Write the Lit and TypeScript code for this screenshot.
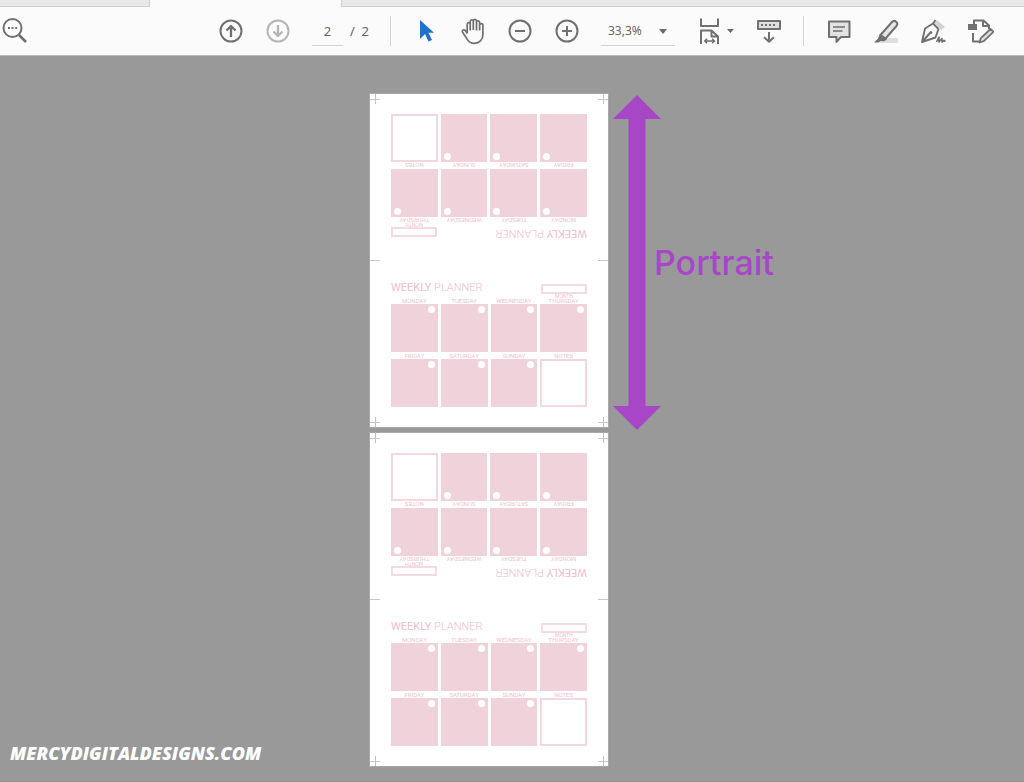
import { LitElement, html, css, svg } from "lit";
import { customElement, property } from "lit/decorators.js";

const DAYS = ["MONDAY", "TUESDAY", "WEDNESDAY", "THURSDAY", "FRIDAY", "SATURDAY", "SUNDAY"];

const icons = {
  find: svg`<circle cx="11.5" cy="11" r="9" /><path d="M18 18 L25 25" stroke-width="2.6" /><path d="M7 11h2M10.6 11h2M14.2 11h2" />`,
  up: svg`<circle cx="14" cy="14" r="10.5" /><path d="M14 20V9M9.5 13.5 14 9l4.500 4.500" stroke-width="2.300" />`,
  down: svg`<circle cx="14" cy="14" r="10.5" /><path d="M14 8v11M9.500 14.500 14 19l4.500-4.500" stroke-width="2.300" />`,
  select: svg`<path d="M8 3v19l5-5 3.500 7.500 3.500-1.600-3.500-7.200H22z" fill="#1f72c9" stroke="none" />`,
  hand: svg`<path d="M8.200 16.500V7.200c0-2.200 3-2.200 3 0v6.300M11.200 13V4.600c0-2.200 3.100-2.200 3.100 0V13M14.300 13V4c0-2.200 3.200-2.200 3.200 0v9.500M17.500 13V5.600c0-2.200 3.100-2.200 3.100 0v8M20.600 13V8.300c0-2.200 3.300-2.200 3.300 0v9.200c0 5.500-3.600 8.800-8.400 8.800-3.700 0-6.200-1.600-7.900-5l-4.200-6.200c-.8-1.900 1.600-3 3-1.500l1.800 2.900" stroke-width="1.700" />`,
  minus: svg`<circle cx="14" cy="14" r="10.500" /><path d="M9 14h10" />`,
  plus: svg`<circle cx="14" cy="14" r="10.500" /><path d="M9 14h10M14 9v10" />`,
  fit: svg`<path d="M5 1.500v7.500h17V1.500M5 27V13.500h10.500l6.500 6V27M15.500 13.500v6H22" /><path d="M8.500 24h10M11 21.700 8.700 24l2.300 2.300M16.200 21.700 18.500 24l-2.300 2.300" stroke-width="1.500" />`,
  keys: svg`<rect x="3" y="4" width="22" height="8" fill="#e0e0e0" /><path d="M6 8h2M10 8h2M14 8h2M18 8h2" /><path d="M14 15v9.500M9 20.200l5 4.600 5-4.600" />`,
  comment: svg`<path d="M4 4.500h20.500v15.500h-8.500l-4.500 4.800V20H4z" fill="#e2e2e2" /><path d="M8 10h12M8 14h9.500" stroke-width="1.400" />`,
  mark: svg`<path d="M10 21h16v5H7z" fill="#dedede" stroke="none" /><path d="M8.500 18 20 5c2.500-2.800 7 .8 4.500 4L13.500 21.500z" fill="#e6e6e6" /><path d="M8 16.500l7 6-3 1.800-3.500-.3-1.800 1.600H2l4-4z" fill="#707070" stroke="none" />`,
  sign: svg`<path d="m18 3 8 7-3.500 3-7-7z" fill="#d4d4d4" stroke="none" /><path d="M14 6.500 19.500 12l-3 8.500L3 25 6 11.500zM16.500 3l-2.500 3.500 5.500 5.500M3.500 24.500l7.500-8.500" stroke-width="1.900" /><circle cx="11.800" cy="15.500" r="1.500" fill="#707070" stroke="none" /><path d="m17.500 25 2.500-5v5l3-3.500v3.500l2-1.500 1.500 1" stroke-width="1.600" />`,
  edit: svg`<path d="M8 7V3.500h9.500l5.500 5V12M17 3.500v5.500h6M7 16v8.500h6" /><rect x="2" y="7" width="9" height="6" fill="#707070" stroke="none" /><path d="m13.500 25.500 1.200-4.200L24.500 12l3 2.800-9.700 9.400z" fill="#e0e0e0" stroke-width="1.800" />`,
};

@customElement("planner-half")
export class PlannerHalf extends LitElement {
  static styles = css`
    :host { display: block; }
    .half { padding: 19px 21px 20px; color: #ecc2ce; font-family: Roboto, sans-serif; }
    .head { display: flex; justify-content: space-between; height: 17px; }
    h2 { margin: 0; font-size: 11px; line-height: 16px; font-weight: 300; white-space: nowrap; color: #edbecb; }
    h2 b { font-weight: 400; }
    .tag { width: 46px; margin-top: 4px; text-align: center; font-size: 5px; line-height: 4px; }
    .box { height: 10px; box-sizing: border-box; border: 2px solid #f4dbe2; }
    .grid { display: grid; grid-template-columns: repeat(4, 1fr); column-gap: 3px; }
    .label { height: 7px; font-size: 6px; line-height: 8px; text-align: center; }
    .cell { display: flex; justify-content: flex-end; height: 48px; box-sizing: border-box; padding: 2px 3px; background: #efd2da; }
    .notes { background: #fff; border: 2px solid #f2d7de; }
    .dot { width: 7px; height: 7px; border-radius: 50%; background: #fff; }
  `;
  render() {
    return html`<section class="half">
      <div class="head">
        <h2><b>WEEKLY</b> PLANNER</h2>
        <div class="tag"><div class="box"></div>MONTH</div>
      </div>
      <div class="grid">
        ${DAYS.map((d) => html`<div><div class="label">${d}</div><div class="cell"><span class="dot"></span></div></div>`)}
        <div><div class="label">NOTES</div><div class="cell notes"></div></div>
      </div>
    </section>`;
  }
}

@customElement("print-sheet")
export class PrintSheet extends LitElement {
  static styles = css`
    :host { display: block; position: relative; background: #fff; box-shadow: 0 0 0 1px #a8a8a8; }
    .turned { display: block; transform: rotate(180deg); }
    .fold { display: flex; justify-content: space-between; height: 1px; }
    .fold i { width: 10px; background: #c6c6c6; }
    .mark { position: absolute; width: 10px; height: 10px; background: linear-gradient(#c2c2c2, #c2c2c2) 5px 0 / 1px 10px no-repeat, linear-gradient(#c8c8c8, #c8c8c8) 0 5px / 10px 1px no-repeat; }
    .tl { left: 0; top: 0; } .tr { right: 0; top: 0; } .bl { left: 0; bottom: 0; } .br { right: 0; bottom: 0; }
  `;
  render() {
    return html`<planner-half class="turned"></planner-half>
      <div class="fold"><i></i><i></i></div>
      <planner-half></planner-half>
      ${["tl", "tr", "bl", "br"].map((c) => html`<i class="mark ${c}"></i>`)}`;
  }
}

@customElement("tool-button")
export class ToolButton extends LitElement {
  @property() name: keyof typeof icons = "find";
  @property() label = "";
  @property({ type: Boolean }) off = false;
  @property({ type: Boolean }) menu = false;
  static styles = css`
    :host { display: block; flex: none; }
    button { display: flex; align-items: center; justify-content: center; gap: 3px; min-width: 47px; height: 48px; padding: 0; border: 0; background: none; }
    svg { flex: none; fill: none; stroke: #707070; stroke-width: 2; stroke-linejoin: round; }
    .caret { fill: #6a6a6a; stroke: none; }
    button:disabled svg { stroke: #b5b5b5; }
  `;
  render() {
    return html`<button aria-label=${this.label} ?disabled=${this.off}>
      <svg width="28" height="28" viewBox="0 0 28 28">${icons[this.name]}</svg>
      ${this.menu ? html`<svg class="caret" width="7" height="4"><path d="M0 0h7L3.500 4z" /></svg>` : ""}
    </button>`;
  }
}

@customElement("app-root")
export class AppRoot extends LitElement {
  static styles = css`
    :host { display: flex; flex-direction: column; min-height: 100vh; background: #999; font-family: "Noto Sans", "Open Sans", sans-serif; }
    .tabs { display: flex; height: 7px; background: #fbfbfb; }
    .tab { box-sizing: border-box; width: 150px; background: #e9e9e9; border: solid #cecece; border-width: 0 1px 1px 0; }
    .rest { flex: 1; margin-left: 191px; border-width: 0 0 1px 1px; }
    .bar { display: flex; align-items: center; height: 48px; background: #fbfbfb; border-bottom: 1px solid #b9b9b9; color: #666; }
    .first { width: 32px; margin-left: -9px; margin-right: 184px; }
    .pager { display: flex; align-items: center; gap: 7px; box-sizing: border-box; width: 89px; padding-left: 11px; font-size: 13px; white-space: pre; }
    input, select { box-sizing: border-box; height: 30px; margin: 0; border: 0; border-bottom: 1px solid #d2d2d2; border-radius: 0; padding: 0; background: none; color: #666; font-family: inherit; outline: 0; appearance: none; }
    input { width: 31px; font-size: 13px; text-align: center; }
    .divider { width: 1px; height: 30px; margin-right: 11px; background: #d6d6d6; }
    .zoom { display: grid; align-items: center; width: 74px; margin: 0 11px; }
    .zoom > * { grid-area: 1 / 1; }
    select { width: 100%; padding-left: 7px; font-size: 12px; }
    .zoom svg { justify-self: end; margin-right: 8px; fill: #6a6a6a; pointer-events: none; }
    .keys { margin: 0 11px 0 1px; }
    .fit { width: 58px; display: flex; justify-content: center; }
    main { flex: 1; display: grid; grid-template-columns: 370fr 238px 416fr; padding: 38px 0 15px; border-bottom: 1px solid #8f8f8f; }
    .brand { align-self: end; margin: 0 0 0 10px; color: #fff; font: italic 800 18px/25px "Open Sans", sans-serif; }
    .sheets { display: grid; gap: 6px; align-content: start; }
    .note { display: flex; align-items: center; align-self: start; padding: 1px 0 0 5px; color: #a846c8; font: 500 34px/40px Inter, sans-serif; }
    .note svg { flex: none; fill: #a846c8; }
    .note span { margin-left: -7px; }
  `;
  render() {
    return html`
      <div class="tabs"><div class="tab"></div><div class="tab rest"></div></div>
      <header class="bar">
        <tool-button class="first" name="find" label="Find"></tool-button>
        <tool-button name="up" label="Previous page"></tool-button>
        <tool-button name="down" label="Next page" off></tool-button>
        <div class="pager"><input aria-label="Page number" value="2" /><span>/  2</span></div>
        <i class="divider"></i>
        <tool-button name="select" label="Select"></tool-button>
        <tool-button name="hand" label="Pan"></tool-button>
        <tool-button name="minus" label="Zoom out"></tool-button>
        <tool-button name="plus" label="Zoom in"></tool-button>
        <div class="zoom">
          <select aria-label="Zoom level"><option>33,3%</option></select>
          <svg width="8" height="5"><path d="M0 0h8L4 5z" /></svg>
        </div>
        <tool-button class="fit" name="fit" label="Fit width" menu></tool-button>
        <tool-button class="keys" name="keys" label="Show toolbar"></tool-button>
        <i class="divider"></i>
        <tool-button name="comment" label="Comment"></tool-button>
        <tool-button name="mark" label="Highlight"></tool-button>
        <tool-button name="sign" label="Sign"></tool-button>
        <tool-button name="edit" label="Edit"></tool-button>
      </header>
      <main>
        <p class="brand">MERCYDIGITALDESIGNS.COM</p>
        <div class="sheets"><print-sheet></print-sheet><print-sheet></print-sheet></div>
        <div class="note">
          <svg width="48" height="335" viewBox="0 0 48 335"><path d="M24 0 48 24H32.500V311H48L24 335 0 311H15.500V24H0z" /></svg>
          <span>Portrait</span>
        </div>
      </main>`;
  }
}
